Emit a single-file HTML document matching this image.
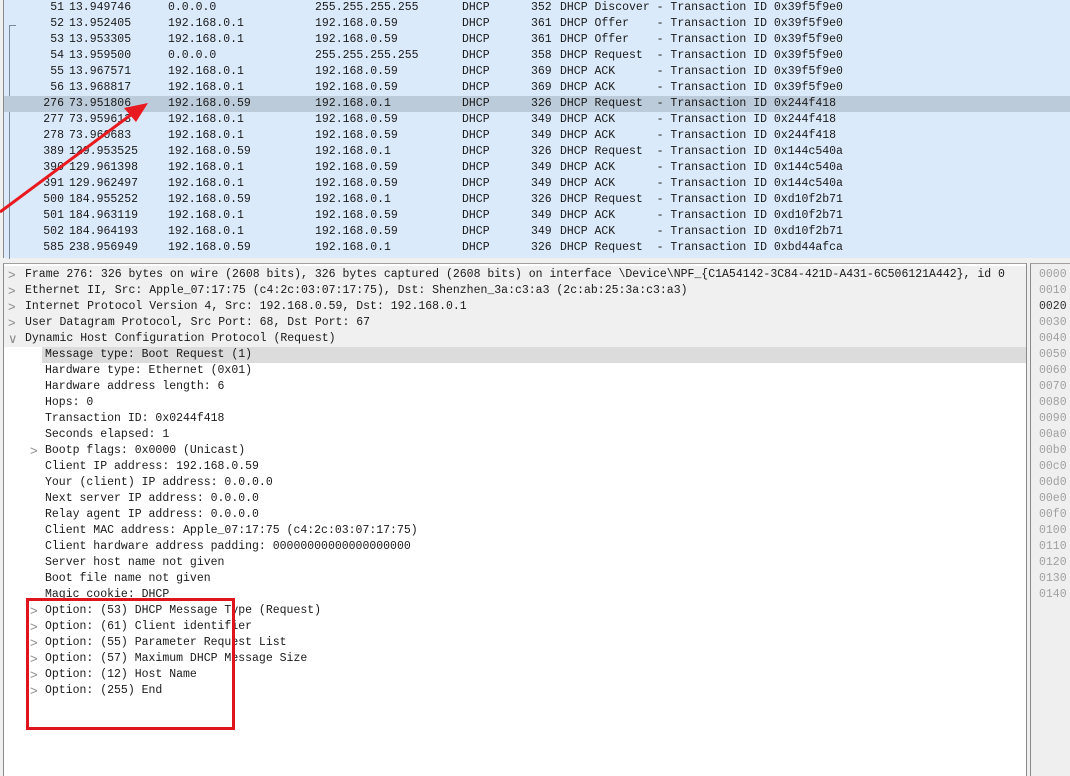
<!DOCTYPE html>
<html><head><meta charset="utf-8"><style>
body{margin:0;width:1070px;height:775px;overflow:hidden;background:#f0f0f0;font-family:"Liberation Mono","DejaVu Sans Mono",monospace;font-size:11.5px;color:#1a1a1a;position:relative}
#list{position:absolute;left:3px;top:0;width:1067px;height:258px;background:#dbeafb;border-left:1px solid #8a8a8a}
.r{position:absolute;left:0;width:1067px;height:16px;line-height:16px;white-space:pre}
.r span{position:absolute;top:0}
.sel{background:#bccbd9}
#det{position:absolute;left:3px;top:263px;width:1022px;height:512px;background:#fff;border-top:1px solid #a0a0a0;border-left:1px solid #8a8a8a;border-right:1px solid #8a8a8a}
.d{position:absolute;height:16px;line-height:16px;white-space:pre}
.ar{position:absolute;color:#8a8a8a;font-family:"Liberation Sans",sans-serif;font-size:13px;line-height:16px}
#hex{position:absolute;left:1030px;top:263px;width:40px;height:512px;background:#efefef;border-top:1px solid #a0a0a0;border-left:1px solid #8a8a8a}
.h{position:absolute;left:8px;color:#a0a0a0;height:16px;line-height:16px}
</style></head><body>
<div id="list">
<div style="position:absolute;left:5px;top:25px;width:6px;height:233px;border-left:1px solid #7a8a9a;border-top:1px solid #7a8a9a"></div>
</div>
<div id="det"><div style="position:absolute;left:0;top:2px;width:1022px;height:81px;background:#f0f0f0"></div><div style="position:absolute;left:38px;top:83px;width:984px;height:16px;background:#dcdcdc"></div></div>
<div id="hex"></div>
<script>
var rows=[
["51","13.949746","0.0.0.0","255.255.255.255","352","DHCP Discover - Transaction ID 0x39f5f9e0"],
["52","13.952405","192.168.0.1","192.168.0.59","361","DHCP Offer    - Transaction ID 0x39f5f9e0"],
["53","13.953305","192.168.0.1","192.168.0.59","361","DHCP Offer    - Transaction ID 0x39f5f9e0"],
["54","13.959500","0.0.0.0","255.255.255.255","358","DHCP Request  - Transaction ID 0x39f5f9e0"],
["55","13.967571","192.168.0.1","192.168.0.59","369","DHCP ACK      - Transaction ID 0x39f5f9e0"],
["56","13.968817","192.168.0.1","192.168.0.59","369","DHCP ACK      - Transaction ID 0x39f5f9e0"],
["276","73.951806","192.168.0.59","192.168.0.1","326","DHCP Request  - Transaction ID 0x244f418"],
["277","73.959613","192.168.0.1","192.168.0.59","349","DHCP ACK      - Transaction ID 0x244f418"],
["278","73.960683","192.168.0.1","192.168.0.59","349","DHCP ACK      - Transaction ID 0x244f418"],
["389","129.953525","192.168.0.59","192.168.0.1","326","DHCP Request  - Transaction ID 0x144c540a"],
["390","129.961398","192.168.0.1","192.168.0.59","349","DHCP ACK      - Transaction ID 0x144c540a"],
["391","129.962497","192.168.0.1","192.168.0.59","349","DHCP ACK      - Transaction ID 0x144c540a"],
["500","184.955252","192.168.0.59","192.168.0.1","326","DHCP Request  - Transaction ID 0xd10f2b71"],
["501","184.963119","192.168.0.1","192.168.0.59","349","DHCP ACK      - Transaction ID 0xd10f2b71"],
["502","184.964193","192.168.0.1","192.168.0.59","349","DHCP ACK      - Transaction ID 0xd10f2b71"],
["585","238.956949","192.168.0.59","192.168.0.1","326","DHCP Request  - Transaction ID 0xbd44afca"]];
var L=document.getElementById('list'),h='';
rows.forEach(function(r,i){h+='<div class="r'+(i==6?' sel':'')+'" style="top:'+(i*16)+'px"><span style="right:1007px">'+r[0]+'</span><span style="left:65px">'+r[1]+'</span><span style="left:164px">'+r[2]+'</span><span style="left:311px">'+r[3]+'</span><span style="left:458px">DHCP</span><span style="left:527px">'+r[4]+'</span><span style="left:556px">'+r[5]+'</span></div>';});
L.innerHTML+=h;
var D=document.getElementById('det'),d='';
var tops=["Frame 276: 326 bytes on wire (2608 bits), 326 bytes captured (2608 bits) on interface \\Device\\NPF_{C1A54142-3C84-421D-A431-6C506121A442}, id 0","Ethernet II, Src: Apple_07:17:75 (c4:2c:03:07:17:75), Dst: Shenzhen_3a:c3:a3 (2c:ab:25:3a:c3:a3)","Internet Protocol Version 4, Src: 192.168.0.59, Dst: 192.168.0.1","User Datagram Protocol, Src Port: 68, Dst Port: 67","Dynamic Host Configuration Protocol (Request)"];
tops.forEach(function(t,i){var y=3+i*16;d+='<div class="ar" style="left:4px;top:'+y+'px">'+(i==4?'&#x2228;':'&gt;')+'</div><div class="d" style="left:21px;top:'+y+'px">'+t+'</div>';});
var ch=["Message type: Boot Request (1)","Hardware type: Ethernet (0x01)","Hardware address length: 6","Hops: 0","Transaction ID: 0x0244f418","Seconds elapsed: 1",">Bootp flags: 0x0000 (Unicast)","Client IP address: 192.168.0.59","Your (client) IP address: 0.0.0.0","Next server IP address: 0.0.0.0","Relay agent IP address: 0.0.0.0","Client MAC address: Apple_07:17:75 (c4:2c:03:07:17:75)","Client hardware address padding: 00000000000000000000","Server host name not given","Boot file name not given","Magic cookie: DHCP",">Option: (53) DHCP Message Type (Request)",">Option: (61) Client identifier",">Option: (55) Parameter Request List",">Option: (57) Maximum DHCP Message Size",">Option: (12) Host Name",">Option: (255) End"];
ch.forEach(function(t,i){var y=83+i*16;if(t.charAt(0)=='>'){t=t.slice(1);d+='<div class="ar" style="left:26px;top:'+y+'px">&gt;</div>';}d+='<div class="d" style="left:41px;top:'+y+'px">'+t+'</div>';});
D.innerHTML+=d;
var H=document.getElementById('hex'),x='';
for(var i=0;i<21;i++){var s=(i*16).toString(16);while(s.length<4)s='0'+s;x+='<div class="h" style="top:'+(3+i*16)+'px;'+(i==2?'color:#333':'')+'">'+s+'</div>';}
H.innerHTML=x;
</script>
<div style="position:absolute;left:26px;top:598px;width:203px;height:126px;border:3px solid #e0141c"></div>
<svg style="position:absolute;left:0;top:0" width="1070" height="775"><line x1="0" y1="212" x2="132" y2="114" stroke="#e8191f" stroke-width="3"/><polygon points="148,103 124,108 136,122" fill="#e8191f"/></svg>
</body></html>
